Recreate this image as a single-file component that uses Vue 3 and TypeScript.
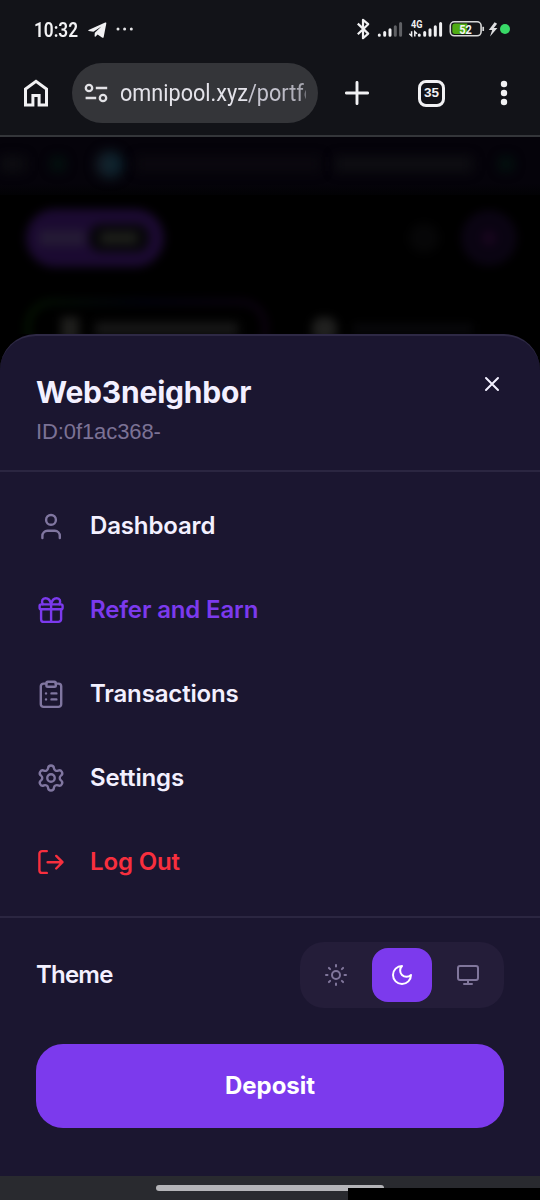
<script setup lang="ts">
import { ref } from 'vue'

type IconName = 'user' | 'gift' | 'clipboard' | 'gear' | 'logout'
type ThemeName = 'light' | 'dark' | 'system'

interface MenuItem {
  label: string
  icon: IconName
  tone: 'plain' | 'accent' | 'danger'
}

const items: MenuItem[] = [
  { label: 'Dashboard', icon: 'user', tone: 'plain' },
  { label: 'Refer and Earn', icon: 'gift', tone: 'accent' },
  { label: 'Transactions', icon: 'clipboard', tone: 'plain' },
  { label: 'Settings', icon: 'gear', tone: 'plain' },
  { label: 'Log Out', icon: 'logout', tone: 'danger' },
]

const themes: ThemeName[] = ['light', 'dark', 'system']
const theme = ref<ThemeName>('dark')
</script>

<template>
  <div class="screen">
    <header class="status">
      <span class="clock">10:32</span>
      <svg class="telegram" width="19" height="17" viewBox="0 0 19 17">
        <path d="M.6 8.1 17.2.6c.8-.3 1.3.1 1.1 1l-2.6 13.3c-.2 1-.9 1.2-1.7.7l-4.400-3.200-2 2c-.5.5-1 .3-1-.4l.2-3.200 6.600-6.200-8 5.200L.8 8.900c-.7-.2-.7-.5-.2-.8z" fill="#f1f1f3" />
      </svg>
      <svg class="more" width="18" height="4" viewBox="0 0 18 4" fill="#e4e4e6">
        <circle cx="2" cy="2" r="1.5" /><circle cx="8.6" cy="2" r="1.5" /><circle cx="15.3" cy="2" r="1.5" />
      </svg>
      <svg class="indicators" width="160" height="26" viewBox="354 16 160 26">
        <path d="M357.8 23.6 368.2 33.6 363 38.2V19.8L368.2 24.2 357.8 34.2" fill="none" stroke="#f0f0f2" stroke-width="2.2" stroke-linejoin="round" />
        <g stroke-width="3" stroke-linecap="round">
          <g stroke="#f0f0f2">
            <path d="M379.3 34.9v.4M384.7 32.4v2.9M390 29.7v5.6" />
            <path d="M419.3 34.9v.4M424.7 32.4v2.9M430 29.7v5.6M435.3 26.8v8.5M440.6 23.5v11.8" />
          </g>
          <path d="M395.3 26.8v8.5M400.6 23.5v11.8" stroke="#606165" />
        </g>
        <text x="411" y="27.8" class="net" textLength="11.5" lengthAdjust="spacingAndGlyphs">4G</text>
        <path d="M411.6 31.2v4.6l-2.3-2M414.8 36.4v-4.6l2.2 2" fill="none" stroke="#f0f0f2" stroke-width="1.5" />
        <rect x="450.3" y="21.8" width="30.8" height="14" rx="4" fill="#15161a" stroke="#d7d8d8" stroke-width="1.6" />
        <path d="M455 23.6h12.3v10.4H455a2.7 2.7 0 0 1-2.7-2.7v-5a2.7 2.7 0 0 1 2.7-2.7z" fill="#4fac15" />
        <path d="M483.2 26.8v4.2" stroke="#d7d8d8" stroke-width="1.7" />
        <text x="459.3" y="33.7" class="charge" textLength="12.6" lengthAdjust="spacingAndGlyphs">52</text>
        <path d="m494.6 22.2-5.800 7.800h3.400l-2.200 6.600 7.400-8.500h-3.600l3.300-4.400z" fill="#dedee0" />
        <circle cx="505" cy="29" r="5" fill="#38d967" />
      </svg>
    </header>

    <nav class="toolbar">
      <svg class="home" width="28" height="30" viewBox="0 0 28 30">
        <path d="M3.500 26.900V11L14 3.400 24.500 11v15.900h-7.400v-9.300h-6.200v9.300z" fill="none" stroke="#f1f1f3" stroke-width="3" />
      </svg>
      <div class="address">
        <svg width="24" height="20" viewBox="0 0 24 20" fill="none" stroke="#e2e2e6" stroke-width="2.3">
          <circle cx="5" cy="5" r="3.2" /><path d="M11.8 5h11.4M1.6 15h10.6" /><circle cx="19" cy="15" r="3.2" />
        </svg>
        <span class="url">omnipool.xyz<span class="path">/portfo</span></span>
      </div>
      <svg class="plus" width="24" height="24" viewBox="0 0 24 24"><path d="M12 1.400v21.200M1.400 12h21.200" stroke="#f1f1f3" stroke-width="2.900" stroke-linecap="round" /></svg>
      <span class="tabs">35</span>
      <svg class="dots" width="8" height="26" viewBox="0 0 8 26" fill="#f1f1f3"><circle cx="4" cy="4" r="3.200" /><circle cx="4" cy="13" r="3.200" /><circle cx="4" cy="22" r="3.200" /></svg>
    </nav>

    <main class="page" aria-hidden="true">
      <div class="ticker">
        <i class="t-text t-a"></i><i class="t-dot"></i><i class="t-coin"></i><i class="t-text t-b"></i><i class="t-text t-c"></i><i class="t-dot t-end"></i>
      </div>
      <div class="topbar">
        <div class="switch"><i class="s-on"></i><i class="s-off"><i></i></i></div>
        <i class="search"></i><i class="avatar"><i></i></i>
      </div>
      <div class="chips">
        <div class="chip first"><i class="c-icon"></i><i class="c-text"></i></div>
        <div class="chip"><i class="c-icon round"></i><i class="c-text dim"></i></div>
      </div>
    </main>

    <section class="sheet">
      <div class="profile">
        <div>
          <h1>Web3neighbor</h1>
          <p>ID:0f1ac368-</p>
        </div>
        <button class="close" aria-label="Close">
          <svg width="24" height="24" viewBox="0 0 24 24"><path d="M18 6 6 18M6 6l12 12" stroke="#f3f0ff" stroke-width="2" stroke-linecap="round" /></svg>
        </button>
      </div>

      <ul class="menu">
        <li v-for="item in items" :key="item.label" :class="item.tone">
          <svg width="30" height="30" viewBox="0 0 30 30" fill="none" stroke="currentColor" stroke-width="2.4" stroke-linecap="round" stroke-linejoin="round">
            <template v-if="item.icon === 'user'">
              <circle cx="15" cy="8.9" r="4.9" />
              <path d="M6.4 27v-2.2a5 5 0 0 1 5-5h7.4a5 5 0 0 1 5 5V27" />
            </template>
            <template v-else-if="item.icon === 'gift'">
              <rect x="3.6" y="9.4" width="23" height="4.9" rx="1.6" />
              <path d="M5.1 14.3v9.9a2.7 2.7 0 0 0 2.7 2.7h14.6a2.7 2.7 0 0 0 2.7-2.7v-9.9M15.1 9.4v17.5M6.8 9.2C5 6.2 6.5 3.2 9.4 3.2c3 0 5.1 2.7 5.7 6.2.6-3.5 2.7-6.2 5.7-6.2 2.9 0 4.4 3 2.6 6" />
            </template>
            <template v-else-if="item.icon === 'clipboard'">
              <path d="M10.4 4.6H7.5a2.7 2.7 0 0 0-2.7 2.7v17.900a2.700 2.700 0 0 0 2.700 2.700h15a2.700 2.700 0 0 0 2.700-2.700V7.300a2.700 2.700 0 0 0-2.700-2.700h-2.900" />
              <rect x="10.4" y="2.7" width="9.4" height="5" rx="1.3" />
              <path d="M10 14.4h.05M15.5 14.4h4.9M10 20.4h.05M15.5 20.4h4.9" />
            </template>
            <g v-else-if="item.icon === 'gear'" transform="scale(1.25)" stroke-width="1.9">
              <path d="M9.671 4.136a2.34 2.34 0 0 1 4.659 0 2.34 2.34 0 0 0 3.319 1.915 2.34 2.34 0 0 1 2.33 4.033 2.34 2.34 0 0 0 0 3.831 2.34 2.34 0 0 1-2.33 4.033 2.34 2.34 0 0 0-3.319 1.915 2.34 2.34 0 0 1-4.659 0 2.34 2.34 0 0 0-3.32-1.915 2.34 2.34 0 0 1-2.33-4.033 2.34 2.34 0 0 0 0-3.831A2.34 2.34 0 0 1 6.35 6.051a2.34 2.34 0 0 0 3.319-1.915" />
              <circle cx="12" cy="12" r="3" />
            </g>
            <path v-else d="M10.8 4.1H6.1a2.7 2.7 0 0 0-2.7 2.7v16.4a2.7 2.7 0 0 0 2.7 2.7h4.7M11.6 15.2h14.8M20.2 8.9l6.3 6.3-6.3 6.3" />
          </svg>
          <span>{{ item.label }}</span>
        </li>
      </ul>

      <div class="theme">
        <span class="theme-label">Theme</span>
        <div class="segments">
          <button v-for="name in themes" :key="name" :class="{ active: theme === name }" :aria-label="name" @click="theme = name">
            <svg width="24" height="24" viewBox="0 0 24 24" fill="none" stroke="currentColor" stroke-width="2" stroke-linecap="round" stroke-linejoin="round">
              <template v-if="name === 'light'">
                <circle cx="12" cy="12" r="4" />
                <path d="M12 2v1.500M12 20.500V22M4.930 4.930l1.200 1.200M17.870 17.870l1.200 1.200M2 12h1.500M20.500 12H22M6.130 17.870l-1.200 1.200M19.070 4.930l-1.200 1.200" />
              </template>
              <path v-else-if="name === 'dark'" d="M12 3a6 6 0 0 0 9 9 9 9 0 1 1-9-9Z" />
              <template v-else>
                <rect x="2" y="3" width="20" height="14" rx="2" />
                <path d="M8 21h8M12 17v4" />
              </template>
            </svg>
          </button>
        </div>
      </div>

      <button class="deposit"><span>Deposit</span></button>
    </section>

    <footer class="gesture"><i class="handle"></i><i class="corner"></i></footer>
  </div>
</template>

<style>
html,
body {
  background: #000;
}
</style>

<style scoped>
* {
  box-sizing: border-box;
}
.screen {
  width: 540px;
  height: 1200px;
  display: flex;
  flex-direction: column;
  overflow: hidden;
  background: #000;
  font-family: Inter, "Liberation Sans", sans-serif;
}
button {
  border: 0;
  padding: 0;
  background: none;
  font: inherit;
  color: inherit;
}
svg {
  display: block;
  flex: none;
}
.status {
  height: 59px;
  flex: none;
  display: flex;
  align-items: center;
  padding: 0 26px 1px 34px;
  background: #121318;
}
.clock {
  width: 53px;
  padding-top: 1px;
  font: 600 20px/24px Roboto, sans-serif;
  color: #f2f2f4;
  transform: scaleX(0.86);
  transform-origin: 0 50%;
}
.telegram {
  margin: 2px 9px 0 1px;
}
.indicators {
  margin-left: auto;
}
.net {
  font: 700 10.5px Roboto, sans-serif;
  fill: #f0f0f2;
}
.charge {
  font: 700 12.5px Roboto, sans-serif;
  fill: #f4f4f4;
}
.toolbar {
  height: 78px;
  flex: none;
  display: flex;
  align-items: center;
  padding: 0 32px 8px 22px;
  background: #121318;
  border-bottom: 2px solid #34363a;
}
.home {
  margin-right: 22px;
}
.address {
  width: 246px;
  height: 60px;
  display: flex;
  align-items: center;
  gap: 12px;
  padding: 0 12px;
  border-radius: 30px;
  background: #343539;
}
.url {
  width: 202px;
  flex: none;
  overflow: hidden;
  white-space: nowrap;
  font: 400 23.5px/32px Roboto, sans-serif;
  color: #e4e3ea;
  transform: scaleX(0.92);
  transform-origin: 0 50%;
  mask-image: linear-gradient(90deg, #000 84%, rgba(0, 0, 0, 0.75));
}
.path {
  color: #c5c4cf;
}
.plus {
  margin-left: 27px;
}
.tabs {
  width: 27px;
  height: 27px;
  margin-left: 49px;
  display: grid;
  place-items: center;
  border: 3px solid #f1f1f3;
  border-radius: 8px;
  font: 700 13.5px/1 "Liberation Sans", sans-serif;
  color: #f1f1f3;
}
.dots {
  margin-left: auto;
}

.page {
  height: 197px;
  flex: none;
  overflow: hidden;
  background: #000;
}
.page i {
  display: block;
  flex: none;
}
.ticker {
  height: 58px;
  display: flex;
  align-items: center;
  padding-bottom: 4px;
  background: linear-gradient(#05030a 80%, #020204);
}
.ticker > i {
  filter: blur(6px);
}
.t-text {
  height: 14px;
  background: #0e0e12;
}
.t-a {
  width: 25px;
}
.t-dot {
  width: 14px;
  height: 14px;
  margin-left: 26px;
  border-radius: 50%;
  background: #021610;
}
.t-coin {
  width: 27px;
  height: 27px;
  margin-left: 31px;
  border-radius: 50%;
  background: linear-gradient(90deg, #172029, #0a2530);
}
.t-b {
  width: 184px;
  margin-left: 13px;
  background: #0b090f;
}
.t-c {
  width: 137px;
  margin-left: 15px;
  background: #0f0f13;
}
.t-end {
  margin-left: 27px;
}
.topbar {
  height: 84px;
  display: flex;
  align-items: center;
  padding: 1px 23px 0 26px;
}
.switch {
  width: 138px;
  height: 58px;
  display: flex;
  align-items: center;
  padding-left: 13px;
  border-radius: 29px;
  background: #1b0a31;
  filter: blur(5px);
}
.s-on {
  width: 46px;
  height: 16px;
  background: #241a34;
}
.s-off {
  width: 60px;
  height: 28px;
  margin-left: 4px;
  padding: 8px 12px;
  border-radius: 12px;
  background: #07060a;
}
.s-off > i {
  height: 12px;
  background: #1c1e19;
}
.search {
  width: 30px;
  height: 30px;
  margin-left: 245px;
  border-radius: 50%;
  background: #060607;
  filter: blur(5px);
}
.avatar {
  width: 56px;
  height: 56px;
  margin-left: auto;
  padding: 20px;
  border-radius: 50%;
  background: #0a0412;
  filter: blur(4px);
}
.avatar > i {
  width: 16px;
  height: 16px;
  border-radius: 50%;
  background: #16051c;
}
.chips {
  display: flex;
  padding: 21px 0 0 26px;
}
.chip {
  height: 58px;
  display: flex;
  align-items: center;
  padding-left: 45px;
  filter: blur(5px);
}
.chip.first {
  width: 241px;
  padding-left: 31px;
  border: 4px solid transparent;
  border-radius: 26px;
  background: linear-gradient(#000, #000) padding-box, linear-gradient(90deg, #061d02, #040318 50%, #120318) border-box;
}
.c-icon {
  width: 18px;
  height: 24px;
  background: #1e1e1c;
}
.c-icon.round {
  width: 25px;
  border-radius: 10px;
  background: #20201f;
}
.c-text {
  width: 143px;
  height: 14px;
  margin-left: 16px;
  background: #161616;
}
.c-text.dim {
  width: 120px;
  height: 10px;
  background: #08080b;
}

.sheet {
  height: 842px;
  flex: none;
  border-top: 2px solid #2e2945;
  border-radius: 36px 36px 0 0;
  background: #1b1630;
  color: #f3f0ff;
}
.profile {
  height: 136px;
  display: flex;
  justify-content: space-between;
  padding: 36px 36px 0;
  border-bottom: 2px solid #2b2641;
}
h1 {
  margin: -1px 0 0;
  font-size: 30px;
  line-height: 42px;
  font-weight: 700;
  letter-spacing: -0.2px;
}
p {
  margin: 2px 0 0;
  font-family: "Liberation Sans", sans-serif;
  font-size: 22px;
  line-height: 34px;
  letter-spacing: -0.1px;
  color: #7b7295;
}
.close {
  width: 24px;
  height: 24px;
}
.menu {
  list-style: none;
  margin: 0;
  padding: 12px 36px;
  border-bottom: 2px solid #2b2641;
}
.menu li {
  height: 84px;
  display: flex;
  align-items: center;
  gap: 24px;
  font-size: 24px;
  font-weight: 600;
  letter-spacing: -0.15px;
}
.menu span,
.deposit span,
.theme-label {
  padding-bottom: 2px;
}
.menu svg {
  color: #8076a0;
}
.accent,
.accent svg {
  color: #7c3aed;
}
.danger,
.danger svg {
  color: #f82f3e;
}
.theme {
  display: flex;
  align-items: center;
  justify-content: space-between;
  padding: 24px 36px 36px;
  font-size: 24px;
  font-weight: 600;
}
.theme-label {
  letter-spacing: -0.8px;
}
.segments {
  display: flex;
  gap: 12px;
  gap: 6px;
  padding: 6px;
  border-radius: 24px;
  background: #241d39;
}
.segments button {
  width: 60px;
  height: 54px;
  display: grid;
  place-items: center;
  border-radius: 16px;
  color: #80769b;
}
.segments button.active {
  background: #7c3aed;
  color: #fff;
}
.deposit {
  display: flex;
  align-items: center;
  justify-content: center;
  width: 468px;
  height: 84px;
  margin: 0 36px;
  border-radius: 27px;
  background: #7c3aed;
  color: #fff;
  font-size: 24px;
  font-weight: 700;
}
.gesture {
  position: relative;
  height: 24px;
  flex: none;
  padding-top: 9px;
  background: #292a2f;
}
.handle {
  display: block;
  width: 228px;
  height: 6px;
  margin: 0 auto;
  border-radius: 3px;
  background: #b4b4b8;
}
.corner {
  position: absolute;
  right: 0;
  bottom: 0;
  width: 192px;
  height: 12px;
  background: #000;
}
</style>
